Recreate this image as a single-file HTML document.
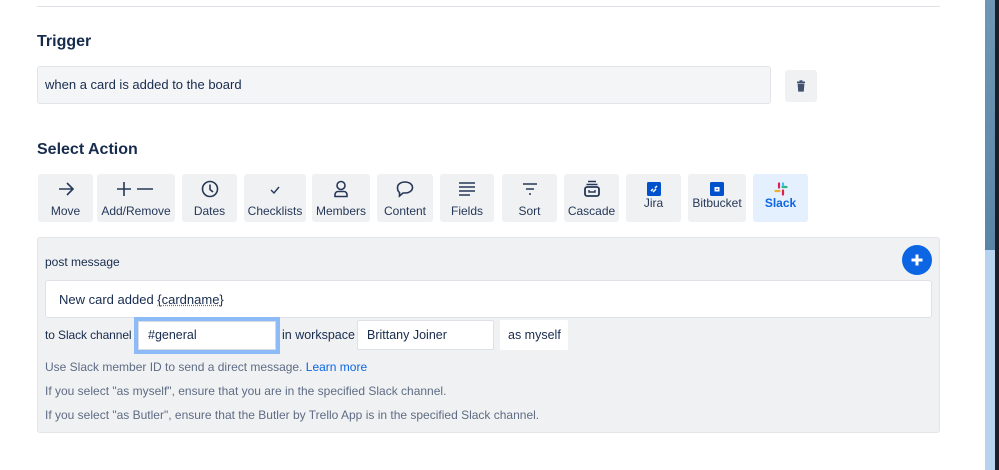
<!DOCTYPE html>
<html><head><style>
*{box-sizing:border-box;margin:0;padding:0}
body{width:999px;height:470px;background:#fff;font-family:"Liberation Sans",Arial,sans-serif;color:#172b4d;position:relative;overflow:hidden}
.a{position:absolute}
h2{position:absolute;font-size:16px;font-weight:bold;color:#172b4d}
.btn{position:absolute;top:174px;height:48px;background:#f0f1f3;border-radius:3px;text-align:center;font-size:12px;color:#253858;white-space:nowrap}
.btn svg{position:absolute;left:50%;transform:translateX(-50%);top:5px}
.btn span{position:absolute;left:0;right:0;top:30px}
.help{position:absolute;left:45px;font-size:12px;color:#5e6c84}
</style></head><body>
<div class="a" style="left:37px;top:6px;width:903px;height:1px;background:#dfe1e6"></div>
<h2 style="left:37px;top:33px">Trigger</h2>
<div class="a" style="left:37px;top:66px;width:734px;height:38px;background:#f4f5f7;border:1px solid #e2e4e8;border-radius:3px;font-size:13px;padding:10px 0 0 7px">when a card is added to the board</div>
<div class="a" style="left:785px;top:70px;width:32px;height:32px;background:#f0f1f3;border-radius:3px">
<svg width="32" height="32"><rect x="12" y="11.5" width="8" height="1.6" fill="#42526e"/><rect x="14.5" y="10.3" width="3" height="1.5" fill="#42526e"/><path d="M12.6 13.6h6.8l-.6 8h-5.6z" fill="#42526e"/></svg></div>
<h2 style="left:37px;top:141px">Select Action</h2>

<div class="btn" style="left:38px;width:55px"><svg width="20" height="20"><path d="M3 10h14M11 4l6 6-6 6" fill="none" stroke="#253858" stroke-width="1.6"/></svg><span>Move</span></div>
<div class="btn" style="left:97px;width:78px"><svg width="42" height="20"><path d="M2 10h14M9 3v14M22 10h16" fill="none" stroke="#253858" stroke-width="1.6"/></svg><span>Add/Remove</span></div>
<div class="btn" style="left:182px;width:55px"><svg width="20" height="20"><circle cx="10" cy="10" r="7.5" fill="none" stroke="#253858" stroke-width="1.6"/><path d="M10 5.5v5l3 2.5" fill="none" stroke="#253858" stroke-width="1.6"/></svg><span>Dates</span></div>
<div class="btn" style="left:244px;width:62px"><svg width="20" height="20"><path d="M6 11l3 3 5-6" fill="none" stroke="#253858" stroke-width="1.4"/></svg><span>Checklists</span></div>
<div class="btn" style="left:312px;width:58px"><svg width="20" height="20"><circle cx="10" cy="6.5" r="4" fill="none" stroke="#253858" stroke-width="1.6"/><path d="M4 17.5v-2a3 3 0 0 1 3-3h6a3 3 0 0 1 3 3v2z" fill="none" stroke="#253858" stroke-width="1.6"/></svg><span>Members</span></div>
<div class="btn" style="left:377px;width:56px"><svg width="20" height="20"><path d="M10 3c4.5 0 7.5 2.5 7.5 5.5S14.5 14 10 14H8l-3.5 3v-3.5C3 12.5 2.5 10.5 2.5 8.5 2.5 5.5 5.5 3 10 3z" fill="none" stroke="#253858" stroke-width="1.6"/></svg><span>Content</span></div>
<div class="btn" style="left:440px;width:54px"><svg width="20" height="20"><path d="M2 4h16M2 8h16M2 12h16M2 16h11" stroke="#253858" stroke-width="1.6"/></svg><span>Fields</span></div>
<div class="btn" style="left:502px;width:55px"><svg width="20" height="20"><path d="M3 5h14M6 10h8M9 15h2" stroke="#253858" stroke-width="1.6"/></svg><span>Sort</span></div>
<div class="btn" style="left:564px;width:55px"><svg width="20" height="20"><path d="M6 2.5h8M4.5 5.5h11" stroke="#253858" stroke-width="1.6"/><rect x="3" y="8" width="14" height="9" rx="2" fill="none" stroke="#253858" stroke-width="1.8"/><path d="M7 11v2h6v-2" fill="none" stroke="#253858" stroke-width="1.4"/></svg><span>Cascade</span></div>
<div class="btn" style="left:626px;width:55px"><svg width="14" height="14" style="top:8px"><rect width="14" height="14" rx="1.5" fill="#0052cc"/><path d="M4 9l2-2M6 10l3-3M8 6l2-2" stroke="#fff" stroke-width="1.5"/></svg><span style="top:22px">Jira</span></div>
<div class="btn" style="left:688px;width:58px"><svg width="14" height="14" style="top:8px"><rect width="14" height="14" rx="1.5" fill="#0052cc"/><rect x="4.5" y="5" width="5" height="4.5" fill="#fff"/><rect x="6.3" y="6.7" width="1.5" height="1.2" fill="#0052cc"/></svg><span style="top:22px">Bitbucket</span></div>
<div class="btn" style="left:753px;width:55px;background:#e4f0fe"><svg width="14" height="14" style="top:8px"><path d="M5 1.5v4M9 8.5v4" stroke="#e01e5a" stroke-width="2.2" stroke-linecap="round"/><path d="M1.5 9h4" stroke="#ecb22e" stroke-width="2.2" stroke-linecap="round"/><path d="M8.5 5h4" stroke="#2eb67d" stroke-width="2.2" stroke-linecap="round"/><path d="M9 1.5v2" stroke="#36c5f0" stroke-width="2.2" stroke-linecap="round"/></svg><span style="top:22px;color:#0c66e4;font-weight:bold">Slack</span></div>

<div class="a" style="left:37px;top:237px;width:903px;height:196px;background:#f0f1f3;border:1px solid #e4e5e8;border-radius:3px"></div>
<div class="a" style="left:45px;top:255px;font-size:12px">post message</div>
<div class="a" style="left:902px;top:245px;width:30px;height:30px;border-radius:50%;background:#0c66e4"><svg width="30" height="30"><path d="M15 9.5v11M9.5 15h11" stroke="#fff" stroke-width="3"/></svg></div>
<div class="a" style="left:45px;top:280px;width:887px;height:38px;background:#fff;border:1px solid #dfe1e6;border-radius:3px;font-size:13px;padding:11px 0 0 13px">New card added <span style="text-decoration:underline dotted #e04040">{cardname}</span></div>
<div class="a" style="left:45px;top:328px;font-size:12px;letter-spacing:-0.1px">to Slack channel</div>
<div class="a" style="left:134px;top:317px;width:146px;height:37px;border:4px solid #8dbbf8;background:#fff;font-size:12.5px;padding:7px 0 0 10px"><div style="position:absolute;inset:0;border:1px solid #d4dbe4"></div>#general</div>
<div class="a" style="left:282px;top:328px;font-size:12.5px">in workspace</div>
<div class="a" style="left:357px;top:320px;width:137px;height:30px;background:#fff;border:1px solid #dfe1e6;border-radius:2px;font-size:12.5px;padding:7px 0 0 9px">Brittany Joiner</div>
<div class="a" style="left:500px;top:320px;width:68px;height:30px;background:#fff;border-radius:2px;font-size:12.5px;padding:8px 0 0 8px">as myself</div>
<div class="help" style="top:360px">Use Slack member ID to send a direct message. <span style="color:#0c66e4">Learn more</span></div>
<div class="help" style="top:384px">If you select "as myself", ensure that you are in the specified Slack channel.</div>
<div class="help" style="top:408px">If you select "as Butler", ensure that the Butler by Trello App is in the specified Slack channel.</div>

<div class="a" style="left:985px;top:0;width:10px;height:250px;background:linear-gradient(#6f97b5,#5a86a6)"></div>
<div class="a" style="left:985px;top:250px;width:10px;height:220px;background:#b8d3ee"></div>
<div class="a" style="left:995px;top:0;width:4px;height:470px;background:#1a1f2a"></div>
</body></html>
